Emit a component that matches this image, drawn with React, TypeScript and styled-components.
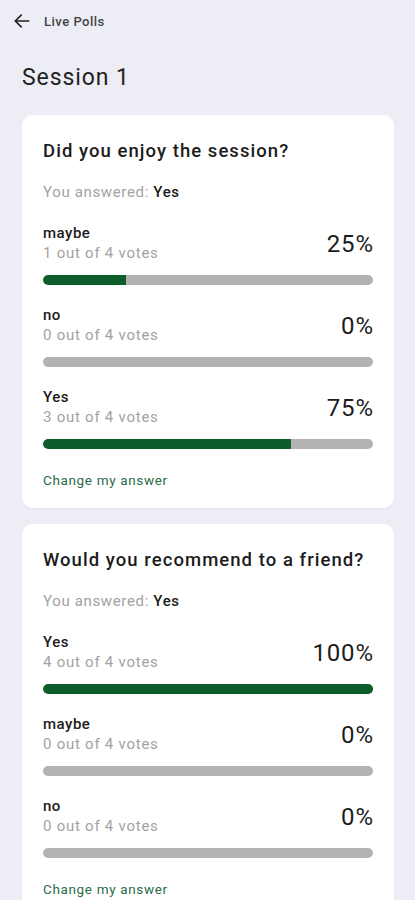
import React from 'react';
import styled, { createGlobalStyle } from 'styled-components';

const GlobalStyle = createGlobalStyle`
  html, body {
    margin: 0;
    padding: 0;
    background: #ecedf5;
    font-family: Roboto, "Noto Sans", "Liberation Sans", sans-serif;
  }
`;

const Page = styled.div`
  width: 415px;
  min-height: 900px;
  background: #ecedf5;
  padding: 0 21px 0 22px;
  box-sizing: border-box;
`;

const TopBar = styled.div`
  display: flex;
  align-items: center;
  height: 42px;
  margin-left: -10px;
  gap: 12px;
`;

const BackButton = styled.button`
  background: none;
  border: none;
  padding: 0;
  width: 20px;
  height: 20px;
  display: flex;
  align-items: center;
  justify-content: center;
  color: #222;
  cursor: pointer;
`;

const TopTitle = styled.span`
  font-size: 13px;
  font-weight: 500;
  letter-spacing: 0.5px;
  color: #444;
`;

const SessionTitle = styled.h1`
  margin: 22px 0 23px 0;
  font-size: 23px;
  line-height: 28px;
  font-weight: 400;
  letter-spacing: 0.9px;
  color: #222;
`;

const CardList = styled.div`
  display: flex;
  flex-direction: column;
  gap: 16px;
`;

const Card = styled.div`
  background: #fff;
  border-radius: 10px;
  padding: 24px 21px 19px 21px;
  box-shadow: 0 1px 2px rgba(30, 30, 60, 0.05);
`;

const Question = styled.h2`
  margin: 0 0 19px 0;
  font-size: 18.5px;
  line-height: 24px;
  font-weight: 500;
  letter-spacing: 1.05px;
  color: #1c1c1c;
  white-space: nowrap;
`;

const Answered = styled.div`
  font-size: 15px;
  line-height: 20px;
  letter-spacing: 0.65px;
  color: #a2a2a2;
  margin-bottom: 21px;
`;

const AnsweredValue = styled.span`
  color: #1c1c1c;
  font-weight: 500;
`;

const OptionList = styled.div`
  display: flex;
  flex-direction: column;
  gap: 20px;
`;

const OptionRow = styled.div`
  display: flex;
  justify-content: space-between;
  align-items: center;
`;

const OptionText = styled.div`
  display: flex;
  flex-direction: column;
`;

const OptionLabel = styled.span`
  font-size: 15px;
  line-height: 20px;
  font-weight: 500;
  letter-spacing: 0.5px;
  color: #1c1c1c;
`;

const Votes = styled.span`
  font-size: 15px;
  line-height: 20px;
  letter-spacing: 0.75px;
  color: #a2a2a2;
`;

const Percent = styled.span`
  font-size: 24px;
  line-height: 28px;
  letter-spacing: 0.8px;
  margin-right: -0.8px;
  color: #1c1c1c;
  margin-top: 2px;
`;

const Track = styled.div`
  margin-top: 12px;
  height: 10px;
  border-radius: 5px;
  background: #b3b3b3;
  overflow: hidden;
`;

const Fill = styled.div`
  height: 100%;
  background: #0e5b2b;
  border-radius: 5px 0 0 5px;
`;

const ChangeLink = styled.button`
  margin-top: 22px;
  background: none;
  border: none;
  padding: 0;
  font-family: inherit;
  font-size: 13.5px;
  line-height: 18px;
  letter-spacing: 0.65px;
  color: #2a6b48;
  cursor: pointer;
  text-align: left;
`;

type Option = { label: string; votes: number };
type Poll = { question: string; answer: string; total: number; options: Option[] };

const polls: Poll[] = [
  {
    question: 'Did you enjoy the session?',
    answer: 'Yes',
    total: 4,
    options: [
      { label: 'maybe', votes: 1 },
      { label: 'no', votes: 0 },
      { label: 'Yes', votes: 3 },
    ],
  },
  {
    question: 'Would you recommend to a friend?',
    answer: 'Yes',
    total: 4,
    options: [
      { label: 'Yes', votes: 4 },
      { label: 'maybe', votes: 0 },
      { label: 'no', votes: 0 },
    ],
  },
];

const BackArrow = () => (
  <svg width="20" height="20" viewBox="0 0 24 24" fill="none" stroke="currentColor" strokeWidth="2" strokeLinecap="round" strokeLinejoin="round">
    <path d="M20 12H4" />
    <path d="M11 5l-7 7 7 7" />
  </svg>
);

const App: React.FC = () => {
  return (
    <Page>
      <GlobalStyle />
      <TopBar>
        <BackButton aria-label="Back">
          <BackArrow />
        </BackButton>
        <TopTitle>Live Polls</TopTitle>
      </TopBar>
      <SessionTitle>Session 1</SessionTitle>
      <CardList>
        {polls.map(poll => (
          <Card key={poll.question}>
            <Question>{poll.question}</Question>
            <Answered>
              You answered: <AnsweredValue>{poll.answer}</AnsweredValue>
            </Answered>
            <OptionList>
              {poll.options.map(opt => {
                const pct = Math.round((opt.votes / poll.total) * 100);
                return (
                  <div key={opt.label}>
                    <OptionRow>
                      <OptionText>
                        <OptionLabel>{opt.label}</OptionLabel>
                        <Votes>{opt.votes} out of {poll.total} votes</Votes>
                      </OptionText>
                      <Percent>{pct}%</Percent>
                    </OptionRow>
                    <Track>
                      <Fill style={{ width: `${pct}%` }} />
                    </Track>
                  </div>
                );
              })}
            </OptionList>
            <ChangeLink>Change my answer</ChangeLink>
          </Card>
        ))}
      </CardList>
    </Page>
  );
};

export default App;
